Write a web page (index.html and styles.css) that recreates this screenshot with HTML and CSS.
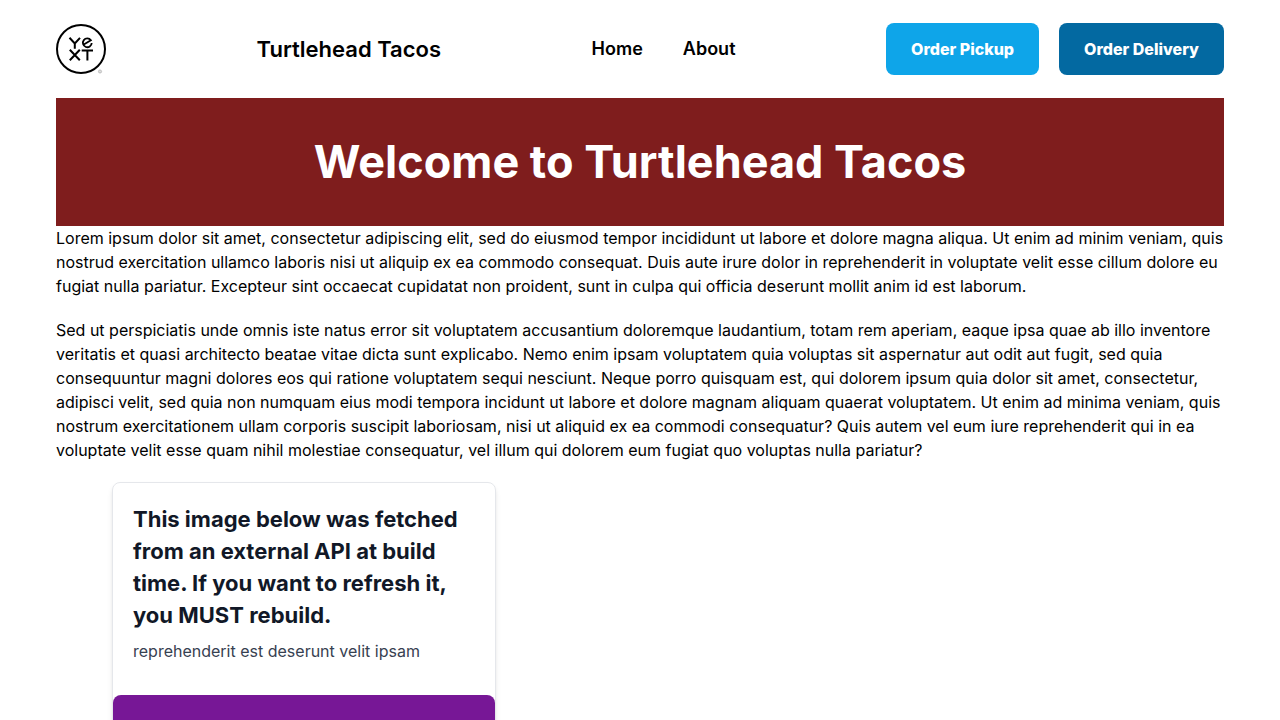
FILE: index.html
```html
<!DOCTYPE html>
<html lang="en">
<head>
<meta charset="utf-8">
<meta name="viewport" content="width=device-width, initial-scale=1">
<title>Turtlehead Tacos</title>
<link rel="stylesheet" href="styles.css">
</head>
<body>
<div class="container">
  <header class="header">
    <svg class="logo" viewBox="0 0 50 50" role="img" aria-label="Yext">
      <circle cx="25" cy="25" r="24" fill="none" stroke="#000" stroke-width="2"/>
      <g fill="none" stroke="#000" stroke-width="2">
        <path d="M13.500 13.800l5.300 5.700 5.200-5.700M18.800 19v5.700M13.800 25.700l10 10.500M23.800 25.700l-10 10.500M25.700 26.500h11.300M31.400 26.500v10"/>
        <path d="M28.200 20.200L34.900 16.300A4.400 4.400 0 1 0 35.700 19" stroke-width="1.800"/>
      </g>
      <circle cx="44" cy="47.500" r="1.600" fill="#ddd" stroke="#999" stroke-width=".5"/>
    </svg>
    <div class="brand">Turtlehead Tacos</div>
    <nav class="nav"><a href="#">Home</a><a href="#">About</a></nav>
    <div class="actions">
      <a class="button pickup" href="#">Order Pickup</a>
      <a class="button delivery" href="#">Order Delivery</a>
    </div>
  </header>
  <main>
    <section class="banner"><h1>Welcome to Turtlehead Tacos</h1></section>
    <div class="copy">
      <p>Lorem ipsum dolor sit amet, consectetur adipiscing elit, sed do eiusmod tempor incididunt ut labore et dolore magna aliqua. Ut enim ad minim veniam, quis nostrud exercitation ullamco laboris nisi ut aliquip ex ea commodo consequat. Duis aute irure dolor in reprehenderit in voluptate velit esse cillum dolore eu fugiat nulla pariatur. Excepteur sint occaecat cupidatat non proident, sunt in culpa qui officia deserunt mollit anim id est laborum.</p>
      <p>Sed ut perspiciatis unde omnis iste natus error sit voluptatem accusantium doloremque laudantium, totam rem aperiam, eaque ipsa quae ab illo inventore veritatis et quasi architecto beatae vitae dicta sunt explicabo. Nemo enim ipsam voluptatem quia voluptas sit aspernatur aut odit aut fugit, sed quia consequuntur magni dolores eos qui ratione voluptatem sequi nesciunt. Neque porro quisquam est, qui dolorem ipsum quia dolor sit amet, consectetur, adipisci velit, sed quia non numquam eius modi tempora incidunt ut labore et dolore magnam aliquam quaerat voluptatem. Ut enim ad minima veniam, quis nostrum exercitationem ullam corporis suscipit laboriosam, nisi ut aliquid ex ea commodi consequatur? Quis autem vel eum iure reprehenderit qui in ea voluptate velit esse quam nihil molestiae consequatur, vel illum qui dolorem eum fugiat quo voluptas nulla pariatur?</p>
    </div>
    <article class="card">
      <div class="card-body">
        <h2>This image below was fetched from an external API at build time. If you want to refresh it, you MUST rebuild.</h2>
        <p>reprehenderit est deserunt velit ipsam</p>
      </div>
      <div class="card-image"></div>
    </article>
  </main>
</div>
</body>
</html>
```
FILE: styles.css
```css
* { box-sizing: border-box; }
body { margin: 0; color: #000; background: #fff; font: 16px/24px Inter, sans-serif; }
h1, h2, p { margin: 0; }
a { color: inherit; text-decoration: none; }
.container { max-width: 1280px; margin: 0 auto; padding: 0 56px; }
.header { display: flex; align-items: center; justify-content: space-between; padding: 23px 0; }
.logo { width: 50px; height: 50px; }
.brand { font-size: 22px; line-height: 32px; font-weight: 600; }
.nav { display: flex; gap: 40px; font-size: 18px; line-height: 28px; font-weight: 600; }
.actions { display: flex; gap: 20px; }
.button { padding: 14px 25px; border-radius: 8px; color: #fff; font-weight: 800; }
.pickup { background: #0ea5e9; }
.delivery { background: #0369a1; }
.banner { display: flex; align-items: center; justify-content: center; padding: 40px; background: #7f1d1d; color: #fff; }
.banner h1 { font-size: 45px; line-height: 48px; font-weight: 700; }
.copy { display: flex; flex-direction: column; gap: 20px; }
.card { max-width: 384px; margin: 20px 56px; border: 1px solid #e5e7eb; border-radius: 8px; box-shadow: 0 4px 6px -1px rgb(0 0 0 / 10%), 0 2px 4px -2px rgb(0 0 0 / 10%); }
.card-body { padding: 20px 20px 32px; color: #374151; }
.card-body h2 { margin-bottom: 8px; font-size: 22px; line-height: 32px; font-weight: 700; color: #111827; }
.card-image { aspect-ratio: 1; border-radius: 8px; background: #771796; }
```
